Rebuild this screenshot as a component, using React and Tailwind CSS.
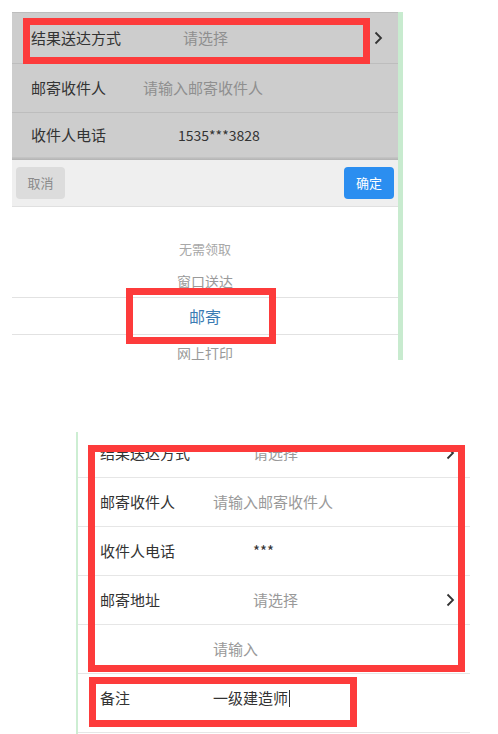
import React from 'react';

const Chevron = ({ className = '' }) => (
  <svg width="9" height="14" viewBox="0 0 9 14" className={className}>
    <polyline points="1.5,1.5 7,7 1.5,12.5" fill="none" stroke="#333" strokeWidth="1.8" />
  </svg>
);

const RedBox = ({ className }) => (
  <div className={`absolute border-[7px] border-[#fd3b3b] pointer-events-none ${className}`} />
);

const TopPanel = () => (
  <div className="ml-[12px] mt-[12px] w-[391px] h-[348px] shrink-0 border-r-[5px] border-[#c8ebcf] flex flex-col overflow-hidden">
    <div className="bg-[#cdcdcd] flex flex-col shrink-0">
      <div className="h-[52px] flex items-center pl-[19px] pr-[15px] border-t border-b border-[#bdbdbd] text-[15px]">
        <span className="w-[112px] text-[#333]">结果送达方式</span>
        <span className="ml-[40px] flex-1 text-[#8f8f8f]">请选择</span>
        <Chevron />
      </div>
      <div className="h-[49px] flex items-center pl-[19px] pr-[15px] border-b border-[#bdbdbd] text-[15px]">
        <span className="w-[112px] text-[#333]">邮寄收件人</span>
        <span className="text-[#8f8f8f]">请输入邮寄收件人</span>
      </div>
      <div className="h-[44px] flex items-center pl-[19px] pr-[15px] text-[15px]">
        <span className="w-[112px] text-[#333]">收件人电话</span>
        <span className="ml-[35px] text-[#333] text-[14px]">1535***3828</span>
      </div>
      <div className="h-[3px] bg-gradient-to-b from-[#c6c6c6] to-[#b3b3b3]" />
    </div>
    <div className="h-[47px] shrink-0 bg-[#efefef] border-b border-[#e0e0e0] flex items-center justify-between px-[4px]">
      <button className="w-[49px] h-[32px] rounded-[4px] bg-[#dcdcdc] text-[#8a8a8a] text-[13px]">取消</button>
      <button className="w-[50px] h-[32px] rounded-[4px] bg-[#2b8ef0] text-white text-[13px]">确定</button>
    </div>
    <div className="flex-1 min-h-0 bg-white flex flex-col overflow-hidden">
      <div className="h-[26px] shrink-0" />
      <div className="h-[32px] shrink-0 flex items-center justify-center text-[13px] text-[#a8a8a8]">无需领取</div>
      <div className="h-[32px] shrink-0 flex items-center justify-center text-[14px] text-[#9a9a9a]">窗口送达</div>
      <div className="h-[38px] shrink-0 flex items-center justify-center text-[16px] text-[#3b7bb3] border-t border-b border-[#e2e2e2]">邮寄</div>
      <div className="h-[36px] shrink-0 flex items-center justify-center text-[14px] text-[#9a9a9a]">网上打印</div>
    </div>
  </div>
);

const Row = ({ label, children, chevron, h = 'h-[49px]' }) => (
  <div className={`${h} shrink-0 flex items-center pl-[22px] pr-[15px] border-b border-[#e6e6e6] text-[15px]`}>
    <span className="w-[113px] text-[#333]">{label}</span>
    <div className="flex-1 flex items-center">{children}</div>
    {chevron && <Chevron />}
  </div>
);

const BottomPanel = () => (
  <div className="ml-[76px] mt-[72px] h-[302px] shrink-0 border-l-2 border-[#cdeed3] overflow-hidden">
    <div className="w-[392px] -mt-[3px] flex flex-col">
      <Row label="结果送达方式" chevron>
        <span className="ml-[40px] text-[#999]">请选择</span>
      </Row>
      <Row label="邮寄收件人">
        <span className="text-[#999]">请输入邮寄收件人</span>
      </Row>
      <Row label="收件人电话">
        <span className="ml-[40px] text-[#333]">***</span>
      </Row>
      <Row label="邮寄地址" chevron>
        <span className="ml-[40px] text-[#999]">请选择</span>
      </Row>
      <Row label="">
        <span className="text-[#999]">请输入</span>
      </Row>
      <div className="h-[59px] shrink-0 pb-[10px] flex items-center pl-[22px] pr-[15px] border-b border-[#e6e6e6] text-[15px]">
        <span className="w-[113px] text-[#333]">备注</span>
        <span className="text-[#333]">一级建造师</span>
        <span className="ml-[1px] w-[1px] h-[17px] bg-[#333]" />
      </div>
    </div>
  </div>
);

export default function App() {
  return (
    <div className="relative w-[498px] h-[734px] bg-white overflow-hidden flex flex-col" style={{ fontFamily: '"Noto Sans CJK SC", "Noto Sans", sans-serif' }}>
      <TopPanel />
      <BottomPanel />
      <RedBox className="left-[23px] top-[18px] w-[347px] h-[46px]" />
      <RedBox className="left-[126px] top-[288px] w-[150px] h-[56px]" />
      <RedBox className="left-[88px] top-[445px] w-[377px] h-[227px]" />
      <RedBox className="left-[89px] top-[677px] w-[268px] h-[50px]" />
    </div>
  );
}
